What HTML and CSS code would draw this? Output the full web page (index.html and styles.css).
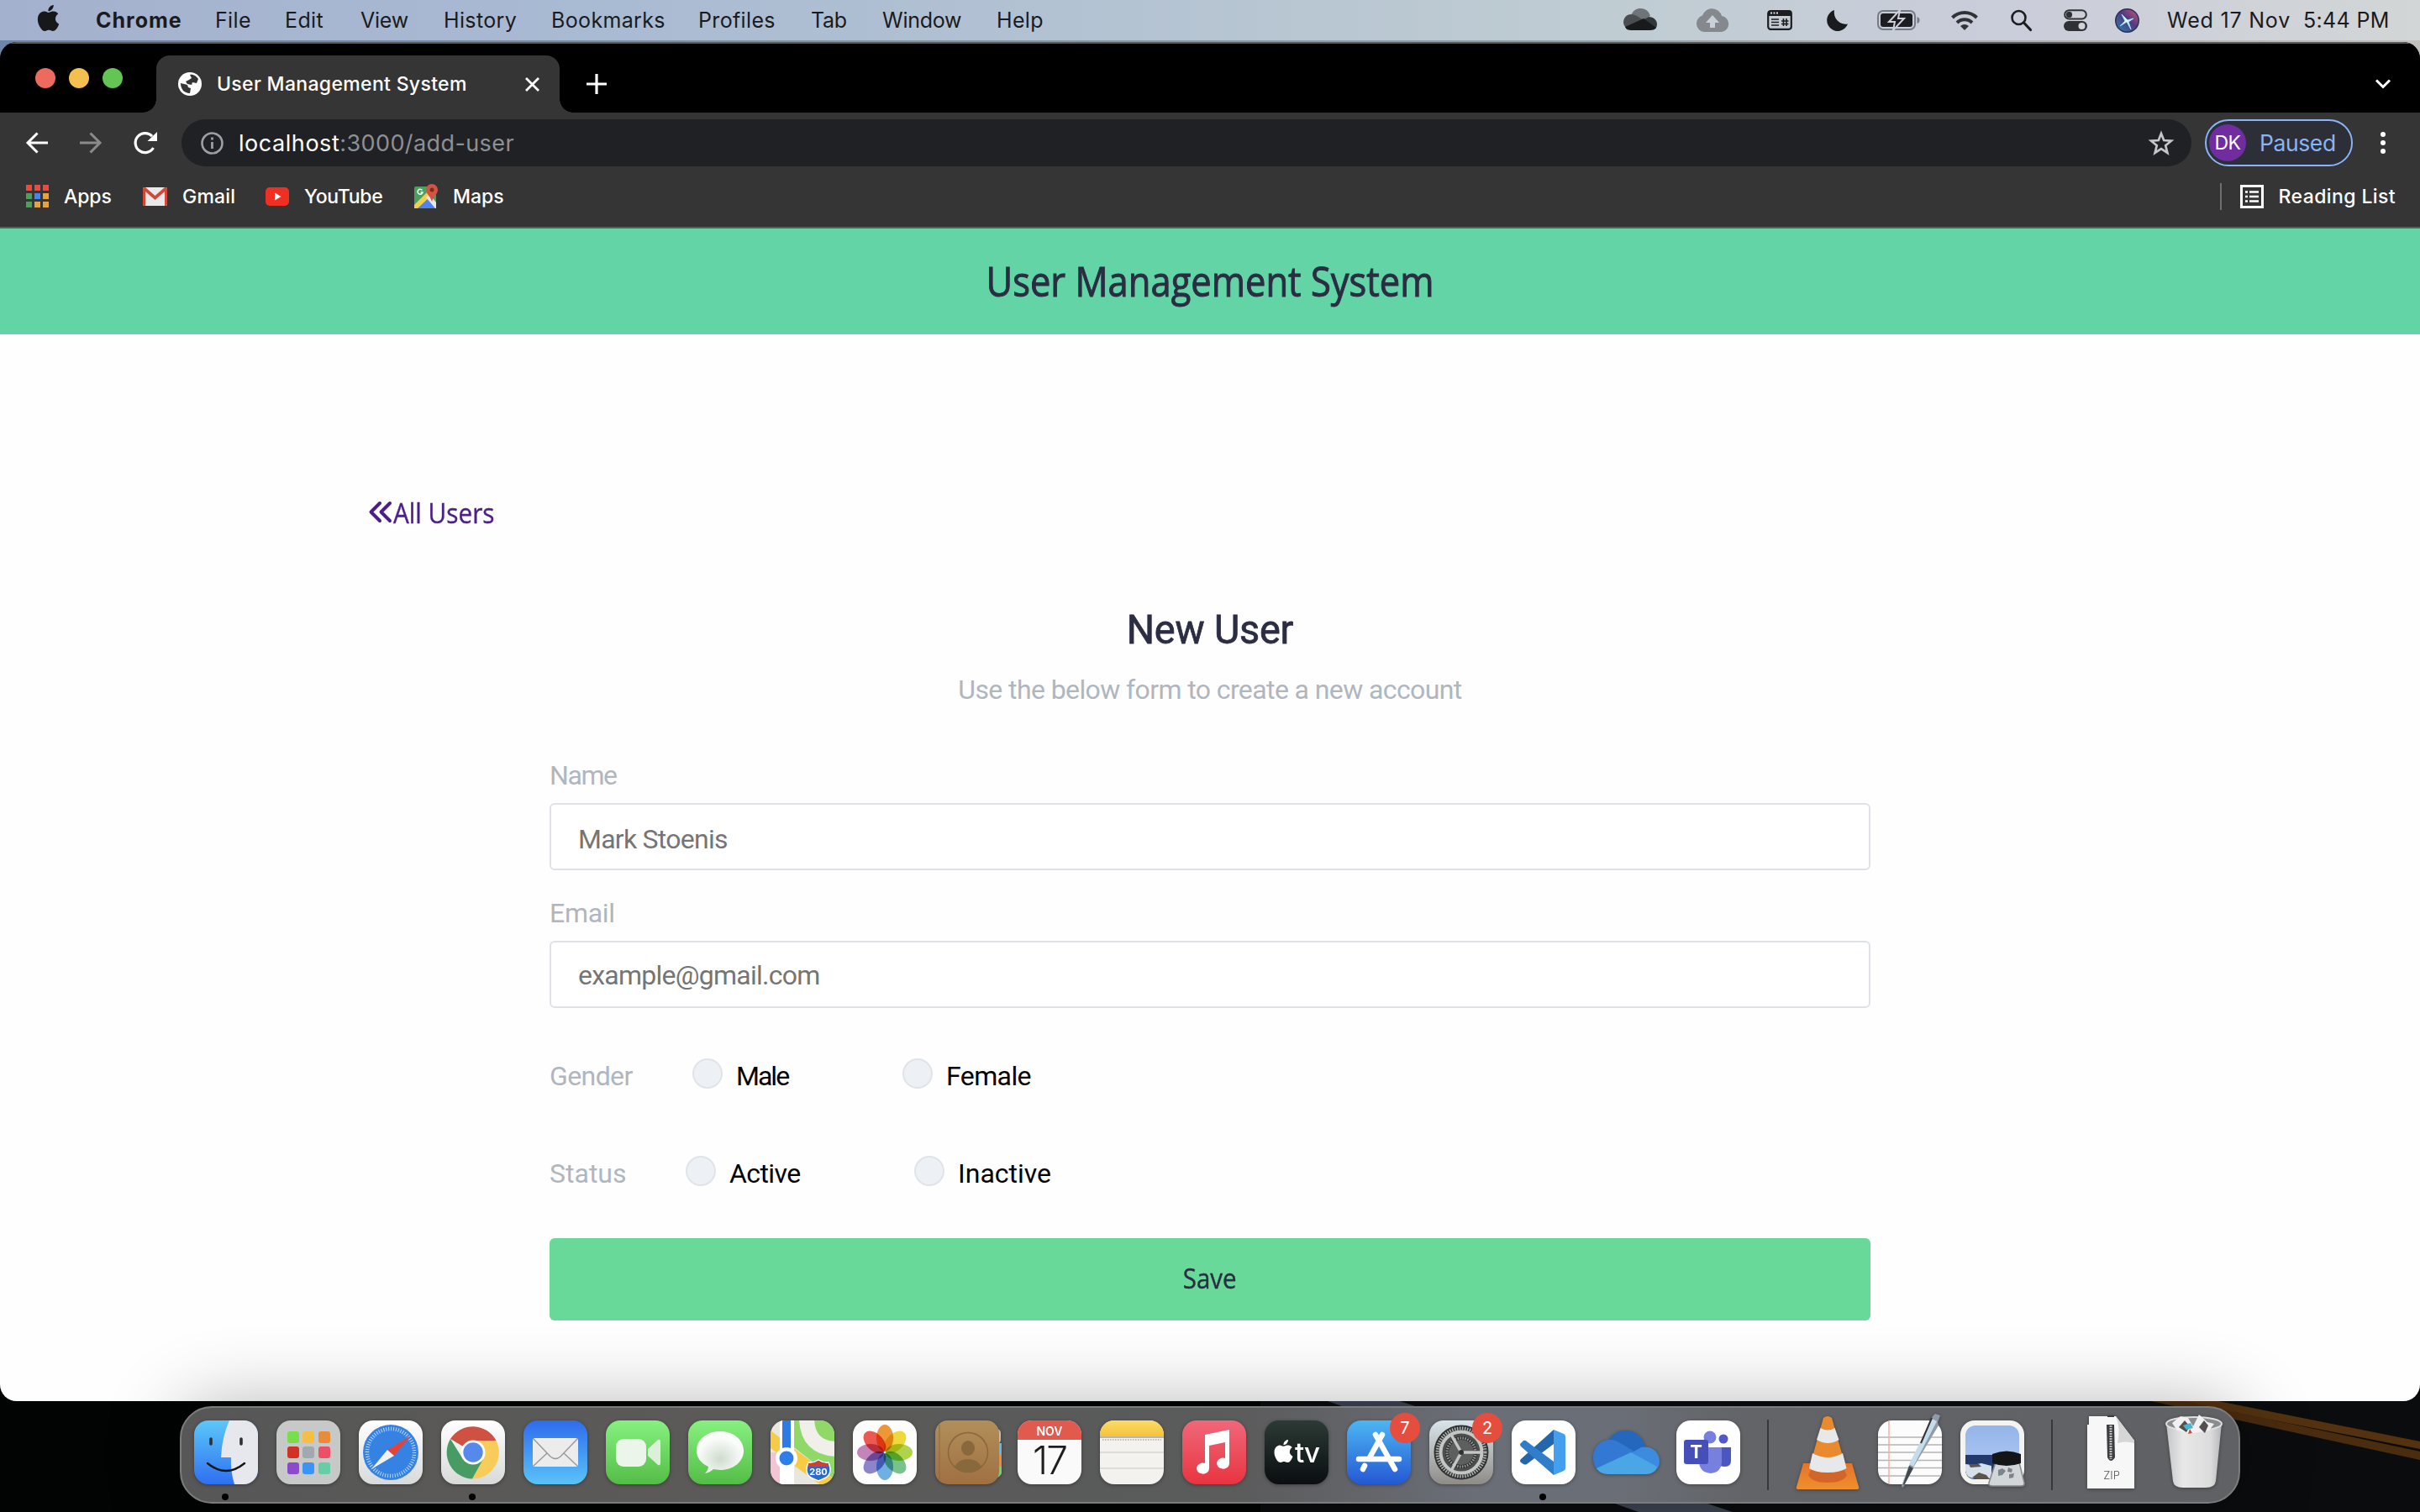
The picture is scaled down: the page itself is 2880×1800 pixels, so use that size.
FILE: index.html
```html
<!DOCTYPE html>
<html lang="en">
<head>
<meta charset="utf-8">
<title>User Management System</title>
<link rel="stylesheet" href="styles.css">
</head>
<body>
<svg class="wallpaper" viewBox="0 0 2880 140" preserveAspectRatio="none">
  <rect width="2880" height="140" fill="#020303"/>
  <rect x="1500" width="1380" height="140" fill="#0b0c0e"/>
  <path d="M1580 8h86l396 132H1950z" fill="#3d4452"/>
  <path d="M2590 8h50l240 48v9z" fill="#54320f"/>
  <path d="M2560 8h40l280 60v10z" fill="#4a2c0e"/>
</svg>

<header class="menubar">
  <nav class="menus">
    <svg class="apple" viewBox="0 0 16 16"><path d="M11.182.008C11.148-.03 9.923.023 8.857 1.18c-1.066 1.156-.902 2.482-.878 2.516s1.52.087 2.475-1.258.762-2.391.728-2.43m3.314 11.733c-.048-.096-2.325-1.234-2.113-3.422s1.675-2.789 1.698-2.854-.597-.79-1.254-1.157a3.7 3.7 0 0 0-1.563-.434c-.108-.003-.483-.095-1.254.116-.508.139-1.653.589-1.968.607-.316.018-1.256-.522-2.267-.665-.647-.125-1.333.131-1.824.328-.49.196-1.422.754-2.074 2.237-.652 1.482-.311 3.83-.067 4.56s.625 1.924 1.273 2.796c.576.984 1.34 1.667 1.659 1.899s1.219.386 1.843.067c.502-.308 1.408-.485 1.766-.472.357.013 1.061.154 1.782.539.571.197 1.111.115 1.652-.105.541-.221 1.324-1.059 2.238-2.758q.52-1.185.473-1.282"/></svg>
    <span class="app-name">Chrome</span><span>File</span><span>Edit</span><span class="snug">View</span><span>History</span><span>Bookmarks</span><span>Profiles</span><span class="snug">Tab</span><span class="snug">Window</span><span>Help</span>
  </nav>
  <div class="status">
    <svg width="40" height="28" viewBox="0 0 40 28"><path d="M9 9C11 2 16 0 20 0c6 0 10 3 12 9L22 14z" fill="#6e7478"/><path d="M0 17c0-6 4-10 9-10 3 0 5 1 7 2l8 5L3 23Q0 20 0 17z" fill="#4a4e52"/><path d="M24 13l6-3c6 0 10 4 10 9 0 2-1 4-2 5z" fill="#34373a"/><path d="M2 22l22-10 15 11c-1 2-4 3-7 3H9c-3 0-6-1-7-4z" fill="#191a1c"/></svg>
    <svg width="40" height="28" viewBox="0 0 40 28"><path fill="#85898d" d="M10 28a10 10 0 0 1-2-19.500A12 12 0 0 1 31 9a9.600 9.600 0 0 1 0 19z"/><path fill="#c9d0d7" d="M20 8l8 9h-5v6h-6v-6h-5z"/></svg>
    <svg width="30" height="24" viewBox="0 0 30 24"><rect x="1.200" y="1.200" width="27.600" height="21.600" rx="3" fill="none" stroke="#1c1d1f" stroke-width="2.200"/><path d="M1 1h28v6H1z" fill="#1c1d1f"/><path d="M4 3.500h2m1.500 0h2m1.500 0h2" stroke="#dde" stroke-width="2"/><path d="M5 11h9M5 14.500h9M5 18h9M19.500 10v9M23 10v9M17 13h8.500M17 16.500h8.500" stroke="#1c1d1f" stroke-width="1.600"/></svg>
    <svg width="25" height="25" viewBox="0 0 25 25"><path fill="#1a1b1d" d="M9 0a14 14 0 0 0 16 16.500A12.800 12.800 0 1 1 9 0z"/></svg>
    <svg width="51" height="24" viewBox="0 0 51 24"><rect x="1" y="1" width="44" height="22" rx="6" fill="none" stroke="#777a82" stroke-width="2"/><rect x="4" y="4" width="38" height="16" rx="3" fill="#1c1d20"/><path d="M47.500 8v8q3-1 3-4t-3-4z" fill="#777a82"/><path d="M27 0L14 14h7l-2 10 13-14h-7z" fill="#1c1d20" stroke="#cdd0da" stroke-width="2"/></svg>
    <svg width="32" height="25" viewBox="0 0 32 25" fill="none" stroke="#303236" stroke-width="4"><path d="M1.500 9a20.500 20.500 0 0 1 29 0M7 15a12.500 12.500 0 0 1 18 0"/><path d="M16 24l-5-5q5-4 10 0z" fill="#303236" stroke="none"/></svg>
    <svg width="25" height="26" viewBox="0 0 25 26" fill="none" stroke="#1c1d1f"><circle cx="9.500" cy="10" r="8" stroke-width="2.600"/><path d="M15.500 16l8 8.500" stroke-width="3.200" stroke-linecap="round"/></svg>
    <svg width="28" height="26" viewBox="0 0 28 26"><rect x="1.200" y="1.200" width="25.600" height="10.400" rx="5.200" fill="none" stroke="#303134" stroke-width="2"/><circle cx="6.500" cy="6.400" r="3.600" fill="#303134"/><rect y="14" width="28" height="12" rx="6" fill="#303134"/><circle cx="21.500" cy="20" r="4" fill="#d0d2d8"/></svg>
    <svg width="29" height="29" viewBox="0 0 29 29"><defs><linearGradient id="siri" x1="1" y1="0" x2="0" y2="1"><stop offset="0" stop-color="#cf5378"/><stop offset=".45" stop-color="#513a83"/><stop offset="1" stop-color="#2780ad"/></linearGradient></defs><circle cx="14.500" cy="14.500" r="14.500" fill="#293150"/><circle cx="14.500" cy="14.500" r="13" fill="url(#siri)"/><path d="M8 7l7 7 7-2-6 4 3 9-5-9-8 5 6-6z" fill="#e9f5ff" stroke="#9fe4f2"/></svg>
    <span class="date">Wed 17 Nov</span><span>5:44 PM</span>
  </div>
</header>

<section class="window">
  <div class="tabstrip">
    <div class="lights"><i class="close"></i><i class="minimise"></i><i class="zoom"></i></div>
    <div class="tab">
      <svg width="28" height="28" viewBox="0 0 28 28"><circle cx="14" cy="14" r="14" fill="#fff"/><path d="M14 3c4-1 8 2 10 5l-2 5-5-1-1 3-5-1-2-3 4-2 3-2zM3 13l8 2 1 3 3 1-1 6C7 25 3 20 3 13z" fill="#353535"/></svg>
      <span class="tab-title">User Management System</span>
      <svg width="17" height="17" viewBox="0 0 17 17" stroke="#fff" stroke-width="2.800"><path d="M1 1l15 15M16 1L1 16"/></svg>
    </div>
    <svg class="plus" width="24" height="24" viewBox="0 0 24 24" stroke="#fff" stroke-width="3.200"><path d="M12 0v24M0 12h24"/></svg>
    <svg class="chevron" width="20" height="12" viewBox="0 0 20 12" fill="none" stroke="#fff" stroke-width="3"><path d="M2 1.500l8 8 8-8"/></svg>
  </div>

  <div class="toolbar">
    <svg width="26" height="26" viewBox="0 0 26 26" fill="none" stroke="#fff" stroke-width="3"><path d="M26 13H2M13.500 1.500L2 13l11.500 11.500"/></svg>
    <svg width="26" height="26" viewBox="0 0 26 26" fill="none" stroke="#8b8b8b" stroke-width="3"><path d="M0 13h24M12.500 1.500L24 13 12.500 24.500"/></svg>
    <svg width="28" height="27" viewBox="0 0 28 27" fill="none" stroke="#fff" stroke-width="3.200"><path d="M23.500 19A11.500 11.500 0 1 1 22 5.200"/><path d="M28 0v11H16.500z" fill="#fff" stroke="none"/></svg>
    <div class="omnibox">
      <svg width="27" height="27" viewBox="0 0 27 27"><circle cx="13.500" cy="13.500" r="12" fill="none" stroke="#9aa0a6" stroke-width="2.600"/><path d="M13.500 12v8M13.500 6.500v3" stroke="#9aa0a6" stroke-width="2.800"/></svg>
      <span class="url"><b>localhost</b>:3000/add-user</span>
      <svg class="star" width="30" height="29" viewBox="0 0 30 29"><path d="M15 3l3.200 8 8.800.700-6.800 5.600 2.200 8.700-7.400-4.800L7.600 26l2.200-8.700L3 11.700l8.800-.700z" fill="none" stroke="#c4c6c9" stroke-width="2.700"/></svg>
    </div>
    <div class="profile"><span class="avatar">DK</span><span class="paused">Paused</span></div>
    <svg class="kebab" width="6" height="26" viewBox="0 0 6 26" fill="#fff"><circle cx="3" cy="3" r="3"/><circle cx="3" cy="13" r="3"/><circle cx="3" cy="23" r="3"/></svg>
  </div>

  <div class="bookmarks">
    <div class="bookmark apps"><svg width="27" height="27" viewBox="0 0 27 27"><g fill="#e94b3f"><path d="M0 0h7v7H0zM10 0h7v7h-7zM20 0h7v7h-7z"/></g><path fill="#4f9f5c" d="M0 10h7v7H0zM0 20h7v7H0z"/><path fill="#4285f4" d="M10 10h7v7h-7z"/><path fill="#eaa33c" d="M20 10h7v7h-7zM10 20h7v7h-7zM20 20h7v7h-7z"/></svg><span>Apps</span></div>
    <div class="bookmark gmail"><svg width="29" height="22" viewBox="0 0 29 22"><rect width="29" height="22" rx="2" fill="#e9e9e9"/><path d="M0 2q0-2 2-2h1l11.500 10L26 0h1q2 0 2 2v18q0 2-2 2h-1V5L14.500 15 3 5v17H2q-2 0-2-2z" fill="#d14836"/></svg><span>Gmail</span></div>
    <div class="bookmark youtube"><svg width="28" height="22" viewBox="0 0 28 22"><rect width="28" height="22" rx="5" fill="#ee2f22"/><path d="M11 6.500v9l7.500-4.500z" fill="#fff"/></svg><span>YouTube</span></div>
    <div class="bookmark maps"><svg width="28" height="29" viewBox="0 0 28 29"><rect y="3" width="26" height="26" rx="2" fill="#4d9f60"/><path d="M0 29l14-15 12 15z" fill="#4c86ec"/><path d="M0 25L17 8l4 5L4 29H0z" fill="#f4cf4b"/><path d="M14 16l4-4 8 10v7h-1z" fill="#e8e8e8"/><path d="M21 0a7 7 0 0 1 7 7c0 5-5 7-7 14-2-7-7-9-7-14a7 7 0 0 1 7-7z" fill="#d65343"/><circle cx="21" cy="7" r="2.500" fill="#7c2c22"/><path d="M9.500 7.500a3 3 0 1 0 .5 2.500H7.500" fill="none" stroke="#fff" stroke-width="1.500"/></svg><span>Maps</span></div>
    <div class="reading"><svg width="28" height="28" viewBox="0 0 28 28"><rect x="1.500" y="1.500" width="25" height="25" fill="none" stroke="#fff" stroke-width="3"/><path d="M6 8.500h3M6 14h3M6 19.500h3M11 8.500h11M11 14h11M11 19.500h11" stroke="#fff" stroke-width="2.600"/></svg><span>Reading List</span></div>
  </div>

  <div class="page">
    <header class="site-header"><h1>User Management System</h1></header>
    <main>
      <a class="back" href="#"><svg width="27" height="25" viewBox="0 0 27 25" fill="none" stroke="#4b1f8a" stroke-width="4" stroke-linecap="round" stroke-linejoin="round"><path d="M13 2L2.500 12.500 13 23M25 2L14.500 12.500 25 23"/></svg><span>All Users</span></a>
      <h2>New User</h2>
      <p class="hint">Use the below form to create a new account</p>
      <form>
        <label class="name-label">Name</label>
        <input class="field name" type="text" placeholder="Mark Stoenis">
        <label class="email-label">Email</label>
        <input class="field email" type="text" placeholder="example@gmail.com">
        <div class="choices gender"><span class="legend">Gender</span><label class="option male"><input type="radio"><span>Male</span></label><label class="option"><input type="radio"><span>Female</span></label></div>
        <div class="choices state"><span class="legend">Status</span><label class="option active"><input type="radio"><span>Active</span></label><label class="option"><input type="radio"><span>Inactive</span></label></div>
        <button class="save" type="button"><span>Save</span></button>
      </form>
    </main>
  </div>
</section>

<footer class="dock">
  <svg width="0" height="0" class="defs"><defs>
    <linearGradient id="gBlue" x2="0" y2="1"><stop stop-color="#5cc8fa"/><stop offset="1" stop-color="#2f6ff0"/></linearGradient>
    <linearGradient id="gMail" x2="0" y2="1"><stop stop-color="#2f6bee"/><stop offset="1" stop-color="#59c3f8"/></linearGradient>
    <linearGradient id="gGreen" x2="0" y2="1"><stop stop-color="#87f180"/><stop offset="1" stop-color="#54bd47"/></linearGradient>
    <linearGradient id="gWhite" x2="0" y2="1"><stop stop-color="#fff"/><stop offset="1" stop-color="#d8dada"/></linearGradient>
    <linearGradient id="gRed" x2="0" y2="1"><stop stop-color="#f0687a"/><stop offset="1" stop-color="#e93440"/></linearGradient>
    <linearGradient id="gTv" x2="0" y2="1"><stop stop-color="#2c3a35"/><stop offset="1" stop-color="#0a0e10"/></linearGradient>
    <linearGradient id="gStore" x2="0" y2="1"><stop stop-color="#4cb6f3"/><stop offset="1" stop-color="#2558d3"/></linearGradient>
    <linearGradient id="gSettings" x2="0" y2="1"><stop stop-color="#d9e5ea"/><stop offset="1" stop-color="#8f8c87"/></linearGradient>
    <linearGradient id="gNote" x2="0" y2="1"><stop stop-color="#fbdc66"/><stop offset="1" stop-color="#f5c23a"/></linearGradient>
    <linearGradient id="gTan" x2="0" y2="1"><stop stop-color="#b18f59"/><stop offset="1" stop-color="#a07043"/></linearGradient>
    <linearGradient id="gCone" x2="0" y2="1"><stop stop-color="#e4732b"/><stop offset="1" stop-color="#f08f2c"/></linearGradient>
    <linearGradient id="gSky" x2="0" y2="1"><stop stop-color="#94b4ea"/><stop offset="1" stop-color="#b3cdf2"/></linearGradient>
    <linearGradient id="gTrash" x2="1" y2="0"><stop stop-color="#c4c5c7"/><stop offset=".3" stop-color="#e8e8e9"/><stop offset=".8" stop-color="#dcdcdd"/><stop offset="1" stop-color="#b4b5b7"/></linearGradient>
    <radialGradient id="gBubble" cx=".5" cy=".65"><stop stop-color="#cfdccd"/><stop offset="1" stop-color="#fbfdfb"/></radialGradient>
    <clipPath id="tile"><rect width="76" height="76" rx="17"/></clipPath>
  </defs></svg>

  <div class="slot running"><svg viewBox="0 0 76 76"><g clip-path="url(#tile)"><rect width="76" height="76" fill="url(#gBlue)"/><path d="M42 0Q33 20 32 44h12q-1 16 4 32h28V0z" fill="#e6e8ee"/></g><path d="M20 22v6M56 22v6" stroke="#2b2f36" stroke-width="3.600" stroke-linecap="round"/><path d="M16 51q22 18 44 0" fill="none" stroke="#14161a" stroke-width="2.400" stroke-linecap="round"/></svg></div>
  <div class="slot"><svg viewBox="0 0 76 76"><rect width="76" height="76" rx="17" fill="#c7c9c9"/><rect x="13" y="13" width="14" height="14" rx="3" fill="#79de4c"/><rect x="31" y="13" width="14" height="14" rx="3" fill="#f6bf44"/><rect x="50" y="13" width="14" height="14" rx="3" fill="#e98b37"/><rect x="13" y="31" width="14" height="14" rx="3" fill="#cf3325"/><rect x="31" y="31" width="14" height="14" rx="3" fill="#a2a8ab"/><rect x="50" y="31" width="14" height="14" rx="3" fill="#ec4f66"/><rect x="13" y="50" width="14" height="14" rx="3" fill="#8d49cb"/><rect x="31" y="50" width="14" height="14" rx="3" fill="#3b93f4"/><rect x="50" y="50" width="14" height="14" rx="3" fill="#67cda4"/></svg></div>
  <div class="slot"><svg viewBox="0 0 76 76"><rect width="76" height="76" rx="17" fill="url(#gWhite)"/><circle cx="38" cy="38" r="33" fill="#3682e3"/><circle cx="38" cy="38" r="28" fill="none" stroke="#bcdcfb" stroke-width="4.500" stroke-dasharray="1 1.930"/><path d="M62 18L42 42l-8-7z" fill="#e2443a"/><path d="M15 58l19-23 8 7z" fill="#f2f2f2"/></svg></div>
  <div class="slot running"><svg viewBox="0 0 76 76"><rect width="76" height="76" rx="17" fill="url(#gWhite)"/><path d="M38 38L11 22A31.500 31.500 0 0 1 65.500 24H38z" fill="#cf5142"/><path d="M38 24h27.500A31.500 31.500 0 0 1 37 69.500L50 45z" fill="#f7cc58"/><path d="M11 22A31.500 31.500 0 0 0 37 69.500L50 46 26 46z" fill="#479b63"/><circle cx="38" cy="38" r="14.500" fill="#fff"/><circle cx="38" cy="38" r="11.700" fill="#5589ec"/></svg></div>
  <div class="slot"><svg viewBox="0 0 76 76"><rect width="76" height="76" rx="17" fill="url(#gMail)"/><rect x="11" y="21" width="54" height="34" rx="3" fill="#ececec"/><path d="M12 22l20 21q6 5 12 0l20-21M12 54l16-15M64 54L48 39" fill="none" stroke="#999" stroke-width="1.400"/></svg></div>
  <div class="slot"><svg viewBox="0 0 76 76"><rect width="76" height="76" rx="17" fill="url(#gGreen)"/><rect x="12" y="22" width="36" height="33" rx="9" fill="#ebf5e9"/><path d="M50 34l12-11q3-1 3 2v26q0 3-3 2L50 42z" fill="#dcefd9"/></svg></div>
  <div class="slot"><svg viewBox="0 0 76 76"><rect width="76" height="76" rx="17" fill="url(#gGreen)"/><path d="M38 13c16 0 28 10 28 23S54 59 38 59l-8-1q-4 4-10 5 4-4 4-8C15 51 10 44 10 36c0-13 12-23 28-23z" fill="url(#gBubble)"/></svg></div>
  <div class="slot"><svg viewBox="0 0 76 76"><g clip-path="url(#tile)"><rect width="76" height="76" fill="#e8e6df"/><path d="M28 0h48v70L28 32z" fill="#8fd968"/><path d="M0 38h14v38H0z" fill="#f3c5d4"/><path d="M0 12l76 58v10H64L0 33z" fill="#f8cb44"/><path d="M43-4q0 38 38 38" fill="none" stroke="#f0efea" stroke-width="18"/><path d="M11 0h17v76H11z" fill="#fff"/><path d="M14 0h10v44H14z" fill="#2f7be6"/></g><circle cx="19" cy="45" r="13" fill="#fff"/><circle cx="19" cy="45" r="8.500" fill="#2f7de9"/><path d="M45 50q6 1 12-3 6 4 12 3 6 14-5 19l-7 3-7-3q-11-5-5-19z" fill="#2c69cc" stroke="#fff" stroke-width="1.500"/><path d="M45 51q6 1 12-3 6 4 12 3v4H45z" fill="#d3402f"/><text x="57" y="65" text-anchor="middle" class="shield">280</text></svg></div>
  <div class="slot"><svg viewBox="0 0 76 76"><rect width="76" height="76" rx="17" fill="#fdfdfd"/><g class="petals"><ellipse cx="38" cy="21" rx="10" ry="16" fill="#f0973a"/><ellipse cx="38" cy="21" rx="10" ry="16" fill="#efdb3b" transform="rotate(45 38 38)"/><ellipse cx="38" cy="21" rx="10" ry="16" fill="#b3d54a" transform="rotate(90 38 38)"/><ellipse cx="38" cy="21" rx="10" ry="16" fill="#79c58b" transform="rotate(135 38 38)"/><ellipse cx="38" cy="21" rx="10" ry="16" fill="#71b1e3" transform="rotate(180 38 38)"/><ellipse cx="38" cy="21" rx="10" ry="16" fill="#8d86cc" transform="rotate(225 38 38)"/><ellipse cx="38" cy="21" rx="10" ry="16" fill="#c585bd" transform="rotate(270 38 38)"/><ellipse cx="38" cy="21" rx="10" ry="16" fill="#ee5a50" transform="rotate(315 38 38)"/></g></svg></div>
  <div class="slot"><svg viewBox="0 0 76 76"><rect x="66" y="10" width="12" height="18" rx="5" fill="#bbb"/><path d="M70 27h9v14h-9z" fill="#61b6ea"/><path d="M70 41h9v14h-9z" fill="#ee8c34"/><path d="M70 55h9v8q-2 5-9 6z" fill="#6ad66b"/><rect width="76" height="76" rx="15" fill="url(#gTan)"/><path d="M5 5v66" stroke="#8d6a3d" stroke-width="1"/><g fill="none" stroke="#8a683e" stroke-width="1.600"><circle cx="39" cy="38" r="23.500"/></g><ellipse cx="39" cy="33" rx="8" ry="9" fill="#8a683e"/><path d="M23 55q5-9 16-9t16 9q-6 7-16 7t-16-7z" fill="#8a683e"/></svg></div>
  <div class="slot"><svg viewBox="0 0 76 76"><g clip-path="url(#tile)"><rect width="76" height="76" fill="#fafafa"/><rect width="76" height="23" fill="#e2594e"/></g><text x="38" y="18" text-anchor="middle" class="month">NOV</text><text x="38" y="64" text-anchor="middle" class="day">17</text></svg></div>
  <div class="slot"><svg viewBox="0 0 76 76"><g clip-path="url(#tile)"><rect width="76" height="76" fill="#f3f2ef"/><rect width="76" height="19" fill="url(#gNote)"/><path d="M0 20h76" stroke="#a9a48f" stroke-width="1.500"/><path d="M3 23h70" stroke="#aaa" stroke-width="1.500" stroke-dasharray="1.500 1.500"/><path d="M0 38h76M0 57h76" stroke="#d6d5d3" stroke-width="1.500"/></g></svg></div>
  <div class="slot"><svg viewBox="0 0 76 76"><rect width="76" height="76" rx="17" fill="url(#gRed)"/><path d="M27 17l29-6v40a7.500 6.500 0 1 1-5-6V26l-19 4v27a7.500 6.500 0 1 1-5-6z" fill="#fff"/></svg></div>
  <div class="slot"><svg viewBox="0 0 76 76"><rect width="76" height="76" rx="17" fill="url(#gTv)"/><svg x="9" y="23" width="27" height="27" viewBox="0 0 16 16" fill="#fff"><path d="M11.182.008C11.148-.03 9.923.023 8.857 1.180c-1.066 1.156-.902 2.482-.878 2.516s1.520.087 2.475-1.258.762-2.391.728-2.430m3.314 11.733c-.048-.096-2.325-1.234-2.113-3.422s1.675-2.789 1.698-2.854-.597-.790-1.254-1.157a3.700 3.700 0 0 0-1.563-.434c-.108-.003-.483-.095-1.254.116-.508.139-1.653.589-1.968.607-.316.018-1.256-.522-2.267-.665-.647-.125-1.333.131-1.824.328-.490.196-1.422.754-2.074 2.237-.652 1.482-.311 3.830-.067 4.560s.625 1.924 1.273 2.796c.576.984 1.340 1.667 1.659 1.899s1.219.386 1.843.067c.502-.308 1.408-.485 1.766-.472.357.013 1.061.154 1.782.539.571.197 1.111.115 1.652-.105.541-.221 1.324-1.059 2.238-2.758q.520-1.185.473-1.282"/></svg><text x="36" y="50" class="tv">tv</text></svg></div>
  <div class="slot"><svg viewBox="0 0 76 76"><rect width="76" height="76" rx="17" fill="url(#gStore)"/><path d="M42 17L26 46M34 17l23 41M14 46h48M21 54l-2 4" stroke="#fff" stroke-width="6.500" stroke-linecap="round"/></svg><b class="badge">7</b></div>
  <div class="slot"><svg viewBox="0 0 76 76"><rect width="76" height="76" rx="17" fill="url(#gSettings)"/><circle cx="38" cy="38" r="32.500" fill="#303231"/><circle cx="38" cy="38" r="28.500" fill="none" stroke="#aeb2b1" stroke-width="4" stroke-dasharray="1.500 1.500"/><circle cx="38" cy="38" r="24.500" fill="#4c4e4d" stroke="#c2c6c5" stroke-width="4"/><circle cx="38" cy="38" r="17" fill="#5d5f5e" stroke="#2b2d2c" stroke-width="4"/><circle cx="38" cy="38" r="17" fill="none" stroke="#999c9b" stroke-width="3" stroke-dasharray="1.500 1.500"/><path d="M38 38h25M38 38L26 17M38 38L26 60" stroke="#c2c6c5" stroke-width="3.500"/><circle cx="38" cy="38" r="3" fill="#303231"/></svg><b class="badge">2</b></div>
  <div class="slot running"><svg viewBox="0 0 76 76"><rect width="76" height="76" rx="17" fill="#fff"/><path d="M50 11L11 46q-2 2 0 4l3 2q2 1 4 0l32-24z" fill="#2466ab"/><path d="M50 65L11 31q-2-3 0-4l3-3q2-1 4 1l32 24z" fill="#2f7dcb"/><path d="M50 11l12 5q2 1 2 3v38q0 2-2 3l-12 5z" fill="#449fee"/></svg></div>
  <div class="slot"><svg viewBox="0 0 76 76"><path d="M17 25c4-9 12-13 21-13 12 0 20 8 23 19L40 42z" fill="#2368bd"/><path d="M-1 44c0-12 9-21 20-21 6 0 9 2 14 5l17 10L4 59q-5-6-5-15z" fill="#3379d3"/><path d="M44 39l12-7c14-3 22 7 22 17 0 5-3 9-6 12z" fill="#3c8bdf"/><path d="M3 57l41-19 31 17q-3 9-13 9H17q-10 0-14-7z" fill="#4ba6e5"/></svg></div>
  <div class="slot"><svg viewBox="0 0 76 76"><rect width="76" height="76" rx="17" fill="#fff"/><circle cx="40" cy="20" r="7.500" fill="#7780df"/><circle cx="56" cy="22" r="5.500" fill="#5059c4"/><path d="M48 32h17v16q0 7-7 7-8 0-10-6z" fill="#4c56c1"/><path d="M27 32h27v18q-1 12-13 13-13-1-14-13z" fill="#7780df"/><rect x="9" y="23" width="29" height="29" rx="3" fill="#464eb8"/><text x="23.500" y="45" text-anchor="middle" class="teams">T</text></svg></div>
  <i class="rule"></i>
  <div class="slot"><svg viewBox="0 0 76 76"><path d="M9 51h58l8 28q1 3-2 3H3q-3 0-2-3z" fill="url(#gCone)"/><path d="M20 55q18 10 36 0l5 10q-4 9-23 9t-23-9z" fill="#d2662a"/><path d="M33-3q5-4 10 0l17 60q-8 5-22 5t-22-5z" fill="#e98a2e"/><path d="M29.500 9q8.500 5 17 0l5 14q-13 8-26.500 0zM20 39q18 10 36 0l4.500 18q-8 5-22.500 5t-22-5z" fill="#e7e8ea"/></svg></div>
  <div class="slot"><svg viewBox="0 0 76 76"><g clip-path="url(#tile)"><rect width="76" height="76" fill="#fcfcfc"/><path d="M0 20h76M0 29h76M0 38h76M0 47.500h76M0 56.500h76M0 66h76" stroke="#b4b4b6" stroke-width="1.500"/><path d="M13 0v76" stroke="#f2b3ab" stroke-width="1.500"/></g><path d="M65-5l3-3 6 2-3 8 1 4-30 50-11 22-2 2-1-2 8-22 14-28z" fill="#8f9ca7"/><path d="M64-2l6 3-28 54-5-3z" fill="#c4dcec"/><path d="M37 54l5 3-11 20-1-1z" fill="#43484d"/><path d="M64-3L51 27" stroke="#333" stroke-width="2"/></svg></div>
  <div class="slot"><svg viewBox="0 0 76 76"><rect width="76" height="76" rx="17" fill="#f3f3f2"/><rect x="6" y="6" width="64" height="64" rx="12" fill="url(#gSky)"/><path d="M6 41h64v17q0 12-12 12H18Q6 70 6 58z" fill="#243a6d"/><path d="M6 52l9 1 10-2 12 3v15H18Q7 69 6 60z" fill="#d5e0ea"/><path d="M10 52h12l3 3-13 1zM14 68l8-6 9 3 4 5H20z" fill="#5d5549"/><path d="M42 50h28l6 24q1 4-4 4H38q-5 0-4-4z" fill="#d2d6d9" stroke="#85898c" stroke-width="1.500"/><path d="M45 59l5-2 4 3-4 5-5 1zM57 56l5 2-1 4-5-1zM58 64l6-1-1 5-5 1z" fill="#7d858c"/><path d="M38 40q17-7 34 0v11q-17 6-34 0z" fill="#141516"/></svg></div>
  <i class="rule"></i>
  <div class="slot"><svg viewBox="0 0 76 76"><path d="M11-5h32l22 29v57H9V5h2z" fill="#f7f7f7"/><path d="M43-5l22 29v3q-10-3-20 0 4-18-2-32z" fill="#d6d6d6"/><path d="M33-6h8v2h-8zM32 5h9l1 39q-5 8-9 0z" fill="#3b3d3f"/><path d="M37 6v40" stroke="#b9bcc0" stroke-width="3" stroke-dasharray="2 1"/><text x="38" y="70" text-anchor="middle" class="zip">ZIP</text></svg></div>
  <div class="slot"><svg viewBox="0 0 76 76"><path d="M5 3h66l-7 69q-1 8-12 8H25q-11 0-12-8z" fill="url(#gTrash)"/><ellipse cx="38" cy="4" rx="33" ry="8" fill="#8a8c8f" stroke="#dedfe0" stroke-width="2"/><path d="M12 3l10-8 9 2 6 10 7-14 10 9 8 2-6 8-18 3-20-3z" fill="#f1f1f1"/><path d="M20 8l7-8 6 7-4 7zM44 8l6-8 5 6-4 9z" fill="#55504f"/><path d="M25 6l9-3 3 6-8 2z" fill="#45b5d0"/><path d="M33 10l3 5-5 1z" fill="#d44a32"/></svg></div>
</footer>
</body>
</html>
```
FILE: styles.css
```css
* { box-sizing: border-box; }
body {
  margin: 0;
  width: 2880px;
  height: 1800px;
  overflow: hidden;
  display: flex;
  flex-direction: column;
  background: #020303;
  font-family: Inter, "Liberation Sans", sans-serif;
}
svg { display: block; flex: none; overflow: visible; }
h1, h2, p { margin: 0; }

.wallpaper { position: absolute; left: 0; top: 1660px; width: 2880px; height: 140px; }

/* menu bar */
.menubar {
  flex: none;
  height: 50px;
  display: flex;
  justify-content: space-between;
  padding: 0 38px 2px 42px;
  background: linear-gradient(90deg, #a4b1ce, #a9bad3 25%, #b3c2d2 44%, #bfccd2 66%, #cacdda 83%, #d3d6d6);
  color: #191b1e;
  font-size: 25px;
  letter-spacing: .35px;
  line-height: 48px;
  white-space: nowrap;
}
.menus { display: grid; grid-template-columns: 72px 142px 83px 90px 99px 128px 175px 134px 85px 136px auto; }
.apple { width: 31px; height: 31px; margin-top: 6px; fill: #17181a; }
.app-name { font-weight: 700; letter-spacing: 1px; }
.snug { letter-spacing: -.25px; }
.status { display: grid; grid-template-columns: 86px 85px 71px 60px 88px 71px 63px 61px 62px 162px 101px; }
.status svg { align-self: center; }
.date { letter-spacing: .8px; }

/* browser window */
.window {
  position: relative;
  flex: none;
  height: 1618px;
  display: flex;
  flex-direction: column;
  border-radius: 20px;
  overflow: hidden;
  background: #353535;
  color: #fff;
}
body::before { content: ""; position: absolute; top: 48px; width: 2880px; height: 30px; background: linear-gradient(90deg, #6d86a8, #8f9fac 60%, #c2bfbc); }
.tabstrip {
  height: 84px;
  flex: none;
  display: flex;
  align-items: center;
  background: #000;
  border-top: 2px solid #5c5c5c;
  padding: 14px 34px 0 42px;
}
.lights { display: flex; gap: 16px; width: 144px; margin-top: -14px; }
.lights i { width: 24px; height: 24px; border-radius: 50%; }
.close { background: #ed6a5e; }
.minimise { background: #f5bf4f; }
.zoom { background: #62c554; }
.tab {
  position: relative;
  width: 480px;
  height: 68px;
  flex: none;
  display: flex;
  align-items: center;
  padding: 0 24px 0 26px;
  background: #353535;
  border-radius: 16px 16px 0 0;
}
.tab::before, .tab::after { content: ""; position: absolute; bottom: 0; width: 16px; height: 16px; }
.tab::before { left: -16px; background: radial-gradient(circle at 0 0, #000 15.5px, #353535 16px); }
.tab::after { right: -16px; background: radial-gradient(circle at 100% 0, #000 15.5px, #353535 16px); }
.tab-title { flex: 1; margin-left: 18px; font-size: 23px; font-weight: 500; letter-spacing: .33px; white-space: nowrap; }
.plus { margin-left: 32px; }
.chevron { margin-left: auto; }

.toolbar { height: 72px; flex: none; display: flex; align-items: center; padding: 0 41px 0 31px; }
.toolbar > svg + svg { margin-left: 38px; }
.omnibox {
  flex: 1;
  height: 56px;
  margin-left: 29px;
  padding: 0 21px 0 23px;
  display: flex;
  align-items: center;
  border-radius: 28px;
  background: #202124;
}
.url { margin-left: 18px; font-size: 27px; letter-spacing: .4px; color: #8e9093; }
.url b { font-weight: 400; color: #fff; letter-spacing: .55px; }
.star { margin-left: auto; }
.profile {
  width: 176px;
  height: 56px;
  margin-left: 16px;
  display: flex;
  align-items: center;
  padding-left: 3px;
  border: 2.500px solid #8ab4f8;
  border-radius: 28px;
  background: #2c2f37;
}
.avatar { width: 44px; height: 44px; border-radius: 50%; background: #6f2da0; font-size: 23px; letter-spacing: -.6px; line-height: 44px; text-align: center; }
.paused { margin-left: 16px; font-size: 26.500px; letter-spacing: -.4px; color: #8ab4f8; }
.kebab { margin-left: 33px; }

.bookmarks { height: 66px; flex: none; display: flex; align-items: center; padding: 0 29px 9px 31px; border-bottom: 2px solid #5e5e5e; font-size: 23px; font-weight: 500; }
.bookmark, .reading { display: flex; align-items: center; white-space: nowrap; }
.bookmark svg { margin-right: 18px; }
.apps { width: 139px; letter-spacing: -.1px; }
.gmail { width: 146px; letter-spacing: .2px; }
.youtube { width: 177px; letter-spacing: -.3px; }
.reading { height: 32px; margin-left: auto; border-left: 2px solid #6f6f6f; padding-left: 22px; letter-spacing: .4px; }
.reading svg { margin-right: 18px; }

/* page */
.page { flex: 1; background: #fefefe; color: #000; font-family: Roboto, "Open Sans", sans-serif; font-size: 32px; letter-spacing: -.6px; }
.site-header { height: 126px; background: #62d4a5; color: #2b2d42; text-align: center; }
h1 { font: 400 49px/124px "Open Sans", sans-serif; letter-spacing: 0; transform: scaleX(.888); -webkit-text-stroke: 1px; }
main { display: flex; flex-direction: column; align-items: center; }
.back { align-self: flex-start; display: flex; align-items: center; margin: 189px 0 0 439px; height: 48px; color: #4b1f8a; text-decoration: none; font: 32px/48px "Open Sans", sans-serif; letter-spacing: 0; -webkit-text-stroke: .4px; }
.back svg { margin-top: -3px; }
.back span { margin-left: 2px; transform: scaleX(.93); transform-origin: left; }
h2 { margin-top: 85px; font-size: 49px; font-weight: 400; line-height: 60px; letter-spacing: -.2px; color: #2b2d42; transform: scaleX(.955); -webkit-text-stroke: .8px; }
.hint { margin-top: 21px; line-height: 40px; color: #afb6bf; }
form { width: 1572px; display: flex; flex-direction: column; line-height: 40px; }
.name-label, .email-label, .legend { color: #afb6bf; }
.name-label { margin-top: 62px; letter-spacing: -1.400px; }
.email-label { margin-top: 31px; letter-spacing: -.3px; }
.field {
  height: 80px;
  padding: 0 32px;
  border: 2px solid #dee2e7;
  border-radius: 6px;
  background: #fff;
  font: inherit;
  letter-spacing: -.75px;
}
.field::placeholder { color: #757575; opacity: 1; }
.name { margin-top: 13px; padding-top: 6px; }
.email { margin-top: 13px; padding-top: 2px; }
.choices { display: flex; height: 40px; }
.gender { margin-top: 61px; }
.state { margin-top: 76px; letter-spacing: 0; }
.option { display: flex; gap: 16px; }
.option input { appearance: none; flex: none; width: 36px; height: 36px; margin: -1px 0 0; border: 2px solid #e0e3e8; border-radius: 50%; background: #edf1f5; }
.gender .legend { width: 170px; }
.gender .option { width: 250px; }
.gender .male { letter-spacing: -2px; }
.state .legend { width: 162px; }
.state .option { width: 272px; }
.active { letter-spacing: -.6px; }
.save { height: 98px; margin-top: 57px; padding: 0 0 3px; border: 0; border-radius: 6px; background: #68d999; color: #2b2d42; font: 32px "Open Sans", sans-serif; letter-spacing: 0; -webkit-text-stroke: .4px; }
.save span { display: inline-block; transform: scaleX(.92); }

/* dock */
.dock {
  position: absolute;
  left: 214px;
  top: 1674px;
  width: 2452px;
  height: 116px;
  display: flex;
  padding: 0 4px;
  border: 2px solid #7b7c7e;
  border-radius: 38px;
  background: linear-gradient(90deg, #575757, #5b5a58 25%, #595a5a 45%, #5c5c5d 52%, #6a6e77 63%, #6a6e76 70%, #626468 76%, #606164);
  box-shadow: 0 0 90px rgba(0, 0, 0, .3);
}
.defs { position: absolute; }
.slot { position: relative; flex: none; width: 98px; padding: 15px 11px; }
.slot > svg { width: 76px; height: 76px; filter: drop-shadow(0 1px 2px rgba(0, 0, 0, .35)); }
.running::after { content: ""; position: absolute; left: 44px; bottom: 2px; width: 8px; height: 8px; border-radius: 50%; background: #000; }
.rule { flex: none; width: 2px; height: 84px; margin: 14px 21px 0; background: #37383a; }
.badge { position: absolute; left: 62px; top: 6px; width: 36px; height: 36px; border-radius: 50%; background: #e54d3f; color: #fff; font-size: 20px; font-weight: 400; line-height: 36px; text-align: center; }
.petals ellipse { mix-blend-mode: multiply; }
.shield { font: 700 11px Inter, sans-serif; fill: #fff; }
.month { font: 600 14px Inter, sans-serif; fill: #fff; }
.day { font: 300 46px Inter, sans-serif; fill: #1e1e1e; letter-spacing: -2px; }
.tv { font: 500 33px Inter, sans-serif; fill: #fff; letter-spacing: -1px; }
.teams { font: 700 22px Inter, sans-serif; fill: #fff; }
.zip { font: 300 13px Inter, sans-serif; fill: #555; }
```
